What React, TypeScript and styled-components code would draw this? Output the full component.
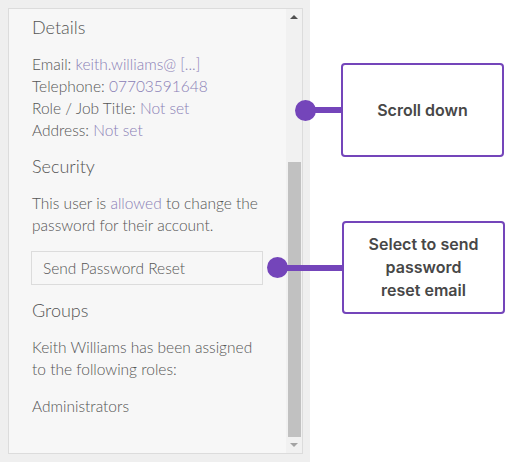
import styled, { createGlobalStyle } from "styled-components";

const GlobalStyle = createGlobalStyle`
  html, body {
    margin: 0;
    padding: 0;
    background: #ffffff;
  }
  body {
    font-family: Lato, "Liberation Sans", sans-serif;
  }
`;

const Page = styled.div`
  position: relative;
  width: 507px;
  height: 462px;
  display: flex;
  background: #ffffff;
  overflow: hidden;
`;

const Backdrop = styled.div`
  width: 310px;
  height: 462px;
  box-sizing: border-box;
  padding: 8px 7px 8px 8px;
  background: #efefef;
`;

const Panel = styled.div`
  height: 446px;
  box-sizing: border-box;
  display: flex;
  border: 1px solid #dcdcdc;
  background: #f7f7f7;
`;

const Content = styled.div`
  flex: 1;
  padding: 4px 0 0 23px;
  overflow: hidden;
  color: #555555;
  font-size: 15.5px;
  font-weight: 300;
`;

const Heading = styled.h3`
  margin: 0 0 12px;
  font-size: 18px;
  font-weight: 300;
  line-height: 28px;
  color: #555555;
`;

const InfoList = styled.div`
  display: flex;
  flex-direction: column;
  margin-bottom: 11px;
  line-height: 22px;
`;

const Text = styled.p`
  margin: 0 0 15px;
  line-height: 22px;
  width: 232px;
`;

const Value = styled.span`
  color: #8a80b6;
`;

const ResetButton = styled.button`
  display: block;
  width: 232px;
  height: 34px;
  margin: 0 0 11px -1px;
  padding: 0 0 0 11px;
  box-sizing: border-box;
  border: 1px solid #dcdcdc;
  background: #f7f7f7;
  text-align: left;
  font-family: Lato, "Liberation Sans", sans-serif;
  font-size: 15.5px;
  font-weight: 300;
  color: #555555;
`;

const Scrollbar = styled.div`
  width: 16px;
  display: flex;
  flex-direction: column;
  align-items: center;
  background: #f1f1f1;
`;

const Arrow = styled.div<{ $down?: boolean }>`
  height: 16px;
  display: flex;
  align-items: center;
  justify-content: center;
  &::after {
    content: "";
    width: 0;
    height: 0;
    border-left: 4px solid transparent;
    border-right: 4px solid transparent;
    ${(p) =>
      p.$down
        ? "border-top: 4px solid #a3a3a3;"
        : "border-bottom: 4px solid #505050;"}
  }
`;

const Track = styled.div`
  flex: 1;
  width: 13px;
  display: flex;
  flex-direction: column;
  justify-content: flex-end;
`;

const Thumb = styled.div`
  height: 275px;
  background: #c1c1c1;
`;

const Callout = styled.div<{ $top: number; $left: number }>`
  position: absolute;
  top: ${(p) => p.$top}px;
  left: ${(p) => p.$left}px;
  display: flex;
  align-items: center;
`;

const Dot = styled.div`
  width: 21px;
  height: 21px;
  border-radius: 50%;
  background: #7445ba;
`;

const Connector = styled.div<{ $width: number }>`
  width: ${(p) => p.$width}px;
  height: 6px;
  margin-left: -2px;
  background: #7445ba;
`;

const NoteBox = styled.div<{ $height: number }>`
  width: 163px;
  height: ${(p) => p.$height}px;
  box-sizing: border-box;
  display: flex;
  align-items: center;
  justify-content: center;
  text-align: center;
  border: 2px solid #7445ba;
  border-radius: 4px;
  background: #ffffff;
  font-family: Inter, "Noto Sans", sans-serif;
  font-weight: 600;
  font-size: 16px;
  line-height: 23px;
  color: #474747;
`;

export default function App() {
  return (
    <Page>
      <GlobalStyle />
      <Backdrop>
        <Panel>
          <Content>
            <Heading>Details</Heading>
            <InfoList>
              <span>
                Email: <Value>keith.williams@ [...]</Value>
              </span>
              <span>
                Telephone: <Value>07703591648</Value>
              </span>
              <span>
                Role / Job Title: <Value>Not set</Value>
              </span>
              <span>
                Address: <Value>Not set</Value>
              </span>
            </InfoList>
            <Heading>Security</Heading>
            <Text>
              This user is <Value>allowed</Value> to change the password for
              their account.
            </Text>
            <ResetButton>Send Password Reset</ResetButton>
            <Heading>Groups</Heading>
            <Text>Keith Williams has been assigned to the following roles:</Text>
            <Text>Administrators</Text>
          </Content>
          <Scrollbar>
            <Arrow />
            <Track>
              <Thumb />
            </Track>
            <Arrow $down />
          </Scrollbar>
        </Panel>
      </Backdrop>
      <Callout $top={63} $left={295}>
        <Dot />
        <Connector $width={27} />
        <NoteBox $height={94}>Scroll down</NoteBox>
      </Callout>
      <Callout $top={221} $left={267}>
        <Dot />
        <Connector $width={56} />
        <NoteBox $height={93}>
          Select to send
          <br />
          password
          <br />
          reset email
        </NoteBox>
      </Callout>
    </Page>
  );
}
